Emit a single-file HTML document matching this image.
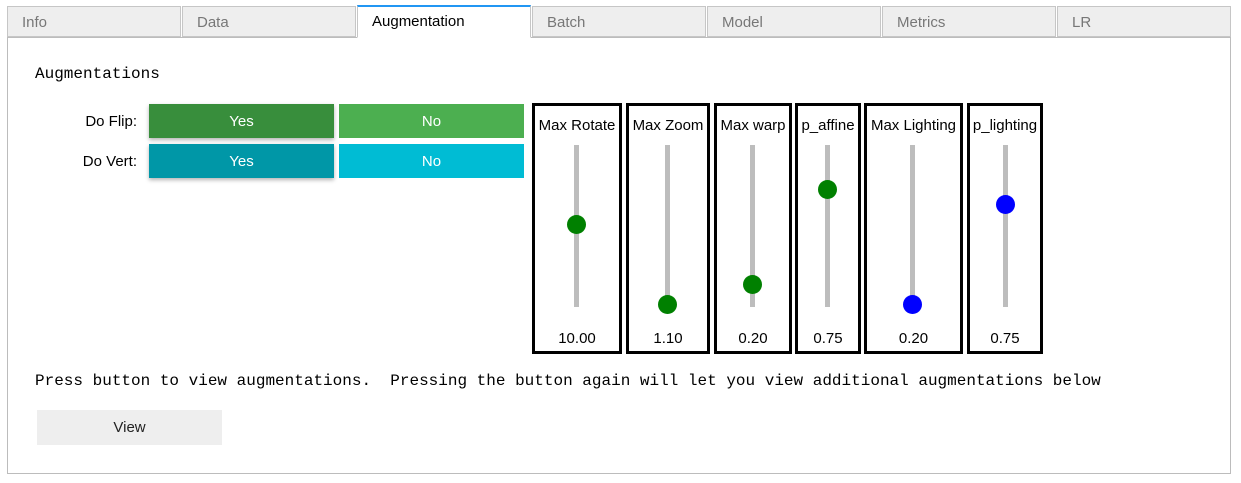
<!DOCTYPE html><html><head><style>
body{margin:0;width:1241px;height:483px;background:#fff;font-family:"Liberation Sans",sans-serif;position:relative;overflow:hidden}
.a{position:absolute}
.tab{position:absolute;top:6px;height:31px;width:174px;background:#eee;border:1px solid #c6c6c6;color:#777;font-size:15px;line-height:31px;padding-left:14px;box-sizing:border-box}
.btn{position:absolute;height:34px;width:185px;color:#fff;font-size:15px;text-align:center;line-height:36px}
.box{position:absolute;top:103px;height:251px;border:3px solid #000;box-sizing:border-box;font-size:15px;color:#000}
.box .t{position:absolute;top:11px;left:0;right:0;text-align:center;white-space:nowrap;overflow:hidden}
.box .v{position:absolute;top:224px;left:0;right:0;text-align:center}
.tr{position:absolute;top:39px;width:5px;height:162px;background:#bdbdbd}
.k{position:absolute;width:19px;height:19px;border-radius:50%}
.mono{font-family:"Liberation Mono",monospace}
</style></head><body>
<div class="a" style="left:7px;top:37px;width:1224px;height:437px;border:1px solid #bcbcbc;box-sizing:border-box"></div>
<div class="tab" style="left:7px">Info</div>
<div class="tab" style="left:182px">Data</div>
<div class="tab" style="left:357px;background:#fff;color:#000;border-top:2px solid #2196f3;border-bottom:1px solid #fff;top:5px;height:33px;line-height:30px">Augmentation</div>
<div class="tab" style="left:532px">Batch</div>
<div class="tab" style="left:707px">Model</div>
<div class="tab" style="left:882px">Metrics</div>
<div class="tab" style="left:1057px;width:174px">LR</div>
<div class="a mono" style="left:35px;top:65px;font-size:16px">Augmentations</div>
<div class="a" style="left:60px;top:113px;width:77px;text-align:right;font-size:15px">Do Flip:</div>
<div class="a" style="left:60px;top:153px;width:77px;text-align:right;font-size:15px">Do Vert:</div>
<div class="btn" style="left:149px;top:104px;background:#388e3c;box-shadow:0 2px 4px rgba(0,0,0,.3)">Yes</div>
<div class="btn" style="left:339px;top:104px;background:#4caf50">No</div>
<div class="btn" style="left:149px;top:144px;background:#0097a7;box-shadow:0 2px 4px rgba(0,0,0,.3)">Yes</div>
<div class="btn" style="left:339px;top:144px;background:#00bcd4">No</div>

<div class="box" style="left:532px;width:90px"><div class="t">Max Rotate</div><div class="tr" style="left:39px"></div><div class="k" style="left:32px;top:109px;background:green"></div><div class="v">10.00</div></div>
<div class="box" style="left:626px;width:84px"><div class="t">Max Zoom</div><div class="tr" style="left:36px"></div><div class="k" style="left:29px;top:189px;background:green"></div><div class="v">1.10</div></div>
<div class="box" style="left:714px;width:78px"><div class="t">Max warp</div><div class="tr" style="left:33px"></div><div class="k" style="left:26px;top:169px;background:green"></div><div class="v">0.20</div></div>
<div class="box" style="left:795px;width:66px"><div class="t">p_affine</div><div class="tr" style="left:27px"></div><div class="k" style="left:20px;top:74px;background:green"></div><div class="v">0.75</div></div>
<div class="box" style="left:864px;width:99px"><div class="t">Max Lighting</div><div class="tr" style="left:43px"></div><div class="k" style="left:36px;top:189px;background:#00f"></div><div class="v">0.20</div></div>
<div class="box" style="left:967px;width:76px"><div class="t">p_lighting</div><div class="tr" style="left:33px"></div><div class="k" style="left:26px;top:89px;background:#00f"></div><div class="v">0.75</div></div>

<div class="a mono" style="left:35px;top:372px;white-space:pre;font-size:16px">Press button to view augmentations.  Pressing the button again will let you view additional augmentations below</div>
<div class="a" style="left:37px;top:410px;width:185px;height:35px;background:#eee;text-align:center;line-height:35px;font-size:15px;color:#222">View</div>
</body></html>
